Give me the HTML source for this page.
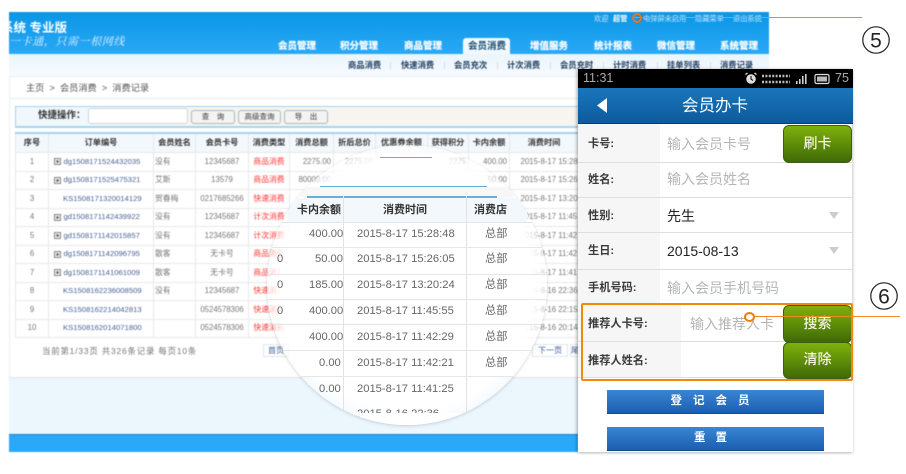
<!DOCTYPE html>
<html lang="zh"><head><meta charset="utf-8"><title>会员办卡</title>
<style>
html,body{margin:0;padding:0;background:#fff}
body{width:906px;height:474px;overflow:hidden;position:relative;font-family:"Liberation Sans","Noto Sans CJK SC",sans-serif;color:#333}
.a{position:absolute;white-space:nowrap}
#app{position:absolute;left:9px;top:12px;width:760px;height:440px;overflow:hidden;background:#fff}
#appwrap{position:absolute;left:0;top:0;width:906px;height:474px;filter:blur(.4px)}
.nav{font-size:9.5px;font-weight:bold;color:#fff;top:41px;line-height:12px;text-shadow:0 0 1px #cfeaff}
.sub{font-size:8.3px;font-weight:bold;color:#1f3c5e;top:60px;line-height:11px}
.sep{width:1px;height:7px;top:62px;background:#d5dde5}
.tl{font-size:7.2px;color:#cfe9ff;top:14px;line-height:9px}
.btn{height:12px;top:110px;border:1px solid #a9b8c4;border-radius:3px;background:#f3f3f1;font-size:7.5px;line-height:12px;text-align:center;color:#333}
table.t{position:absolute;left:15px;top:132px;border-collapse:collapse;table-layout:fixed;width:563px;font-size:7.8px;color:#777;background:#fff}
table.t td,table.t th{border:1px solid #e6e9ec;padding:0;height:17.5px;line-height:10px;text-align:center;white-space:nowrap;overflow:hidden}
table.t th{height:18px;background:#f2f8fc;color:#333;font-size:8.2px;font-weight:bold}
table.t{border-top:2px solid #a6d2ee}
td.n{text-align:left!important;color:#4a6396;font-size:7.7px;padding-left:14.5px!important;position:relative}
td.n.k{padding-left:14px!important}
td.n i{position:absolute;left:5px;top:5px;width:5px;height:5px;border:1px solid #888;background:linear-gradient(#555,#555) center/3px 1px no-repeat,linear-gradient(#555,#555) center/1px 3px no-repeat,#eee}
td.l{text-align:left!important;padding-left:1px!important}
td.r{color:#f33}
td.R{text-align:right!important;padding-right:2px!important}
td.T{text-align:left!important;padding-left:10.5px!important}
#lens{position:absolute;left:267px;top:145px;width:280px;height:280px;border-radius:50%;background:radial-gradient(circle closest-side at center,#fff 0,#fff 90%,rgba(255,255,255,.78) 95%,rgba(255,255,255,.5) 100%);box-shadow:0 1px 3px rgba(120,120,120,.3);overflow:hidden}
#lens .hl{position:absolute;height:1px;background:#62b0de}
#lens .c{position:absolute;font-size:11.2px;line-height:14px;color:#666;white-space:nowrap}
#lens .h{font-weight:bold;color:#333;font-size:11px}
#lens .ln{position:absolute;height:1px;background:#e6e6e6;left:0;width:280px}
#lens .v{position:absolute;width:1px;background:#e3e3e3;top:51px;height:216px}
#phone{position:absolute;left:578px;top:69px;width:275px;height:383px;background:#fff;box-shadow:0 1px 3px rgba(0,0,0,.2),-2px 0 3px rgba(0,0,0,.18)}
#phone .lab{position:absolute;left:0;width:82px;background:#f6f6f6}
#phone .lt{position:absolute;left:10px;font-size:11.2px;font-weight:bold;color:#3a3a3a;line-height:16px;white-space:nowrap}
#phone .ph{position:absolute;left:89px;font-size:14px;color:#b5b5b5;line-height:18px;white-space:nowrap}
#phone .val{position:absolute;left:89px;font-size:14px;color:#222;line-height:18px;white-space:nowrap}
#phone .line{position:absolute;left:0;width:275px;height:1px;background:#dedede}
.g{position:absolute;left:205px;width:67px;border:1px solid #3f5c12;border-radius:6px;background:linear-gradient(#7fb10c,#3f6a05);color:#f4f4e0;font-size:14px;text-align:center;font-weight:500;box-sizing:content-box}
.b{position:absolute;left:29px;width:217px;height:24px;background:linear-gradient(#3a86d4,#1b5eb0);color:#fff;font-size:11.5px;font-weight:bold;text-align:center;line-height:23px;border-bottom:1px solid #154a8c;box-sizing:border-box}
.arr{position:absolute;left:251px;width:0;height:0;border-left:5px solid transparent;border-right:5px solid transparent;border-top:7px solid #ccc}
</style></head><body>
<div id="appwrap">
<div id="app"></div>
<!-- header -->
<div class="a" style="left:9px;top:12px;width:760px;height:42px;background:linear-gradient(#0a96e6,#2aa9f6)"></div>
<div class="a" style="left:9px;top:54px;width:760px;height:23px;background:linear-gradient(#eaf5fc,#f7fbfe);border-bottom:1px solid #e4edf3;box-sizing:border-box"></div>
<div class="a" style="left:9px;top:98px;width:569px;height:1px;background:#e8eef2"></div>
<div class="a" style="left:9px;top:77px;width:1px;height:300px;background:#eee"></div>
<div class="a" style="left:9px;top:21px;width:60px;overflow:hidden;height:14px;font-size:12.5px;font-weight:bold;color:#fff;line-height:14px"><span style="margin-left:-8px">系统 专业版</span></div>
<div class="a" style="left:9px;top:35px;width:116px;overflow:hidden;height:14px;font:italic 11px/14px 'Liberation Serif','Noto Serif CJK SC',serif;color:#dff1ff;letter-spacing:.6px">一卡通，只需一根网线</div>
<span class="a nav" style="left:278px">会员管理</span>
<span class="a nav" style="left:340px">积分管理</span>
<span class="a nav" style="left:404px">商品管理</span>
<div class="a" style="left:463px;top:38px;width:47px;height:16px;background:#f2f9fd;border-radius:3px 3px 0 0"></div>
<span class="a nav" style="left:468px;color:#174a72;text-shadow:none">会员消费</span>
<span class="a nav" style="left:530px">增值服务</span>
<span class="a nav" style="left:594px">统计报表</span>
<span class="a nav" style="left:657px">微信管理</span>
<span class="a nav" style="left:720px">系统管理</span>
<span class="a tl" style="left:594px">欢迎</span>
<span class="a tl" style="left:613px;font-weight:bold;color:#fff">超管</span>
<div class="a" style="left:638px;top:15px;width:5px;height:6px;background:#3c79b8"></div>
<span class="a tl" style="left:643px">电弹屏未启用</span>
<span class="a tl" style="left:695px">隐藏菜单</span>
<span class="a tl" style="left:733px">退出系统</span>
<span class="a sub" style="left:348px">商品消费</span><div class="a sep" style="left:390px"></div>
<span class="a sub" style="left:401px">快速消费</span><div class="a sep" style="left:444px"></div>
<span class="a sub" style="left:454px">会员充次</span><div class="a sep" style="left:497px"></div>
<span class="a sub" style="left:507px">计次消费</span><div class="a sep" style="left:550px"></div>
<span class="a sub" style="left:560px">会员充时</span><div class="a sep" style="left:603px"></div>
<span class="a sub" style="left:613px">计时消费</span><div class="a sep" style="left:657px"></div>
<span class="a sub" style="left:667px">挂单列表</span><div class="a sep" style="left:710px"></div>
<span class="a sub" style="left:720px">消费记录</span>
<!-- breadcrumb -->
<span class="a" style="left:26px;top:82px;font-size:9.2px;line-height:12px;color:#555">主页 &nbsp;&gt;&nbsp; 会员消费 &nbsp;&gt;&nbsp; 消费记录</span>
<!-- toolbar -->
<div class="a" style="left:15px;top:106px;width:563px;height:22px;box-sizing:border-box;border:1px solid #a6d2ee;border-width:1px 0 2px 1px;background:linear-gradient(90deg,#f1f8fd 0,#f1f8fd 14%,#f7f5f0 15%)"></div>
<span class="a" style="left:38px;top:110px;font-size:9.5px;font-weight:bold;line-height:12px;color:#333">快捷操作：</span>
<div class="a" style="left:88px;top:108px;width:100px;height:16px;box-sizing:border-box;background:#fff;border:1px solid #ccd6dd;border-radius:3px"></div>
<div class="a btn" style="left:191px;width:42px">查　询</div>
<div class="a btn" style="left:238px;width:41px">高级查询</div>
<div class="a btn" style="left:284px;width:42px">导　出</div>
<!-- table -->
<table class="t">
<colgroup><col style="width:33px"><col style="width:105px"><col style="width:42px"><col style="width:53px"><col style="width:41px"><col style="width:44px"><col style="width:42px"><col style="width:52px"><col style="width:41px"><col style="width:41px"><col style="width:69px"></colgroup>
<tr><th>序号</th><th>订单编号</th><th>会员姓名</th><th>会员卡号</th><th>消费类型</th><th>消费总额</th><th>折后总价</th><th>优惠券余额</th><th>获得积分</th><th>卡内余额</th><th>消费时间</th></tr>
<tr><td>1</td><td class="n"><i></i>dg1508171524432035</td><td class="l">没有</td><td>12345687</td><td class="r">商品消费</td><td class="R">2275.00</td><td class="R">2275.00</td><td></td><td class="R">2275</td><td class="R">400.00</td><td class="T">2015-8-17 15:28</td></tr>
<tr><td>2</td><td class="n"><i></i>dg1508171525475321</td><td class="l">艾斯</td><td>13579</td><td class="r">商品消费</td><td class="R">80000.00</td><td></td><td></td><td></td><td class="R">50.00</td><td class="T">2015-8-17 15:26</td></tr>
<tr><td>3</td><td class="n k">KS1508171320014129</td><td class="l">贺春梅</td><td>0217685266</td><td class="r">快速消费</td><td></td><td></td><td></td><td></td><td class="R">185.00</td><td class="T">2015-8-17 13:20</td></tr>
<tr><td>4</td><td class="n"><i></i>gd1508171142439922</td><td class="l">没有</td><td>12345687</td><td class="r">计次消费</td><td></td><td></td><td></td><td></td><td></td><td class="T">2015-8-17 11:45</td></tr>
<tr><td>5</td><td class="n"><i></i>gd1508171142015857</td><td class="l">没有</td><td>12345687</td><td class="r">计次消费</td><td></td><td></td><td></td><td></td><td></td><td class="T">2015-8-17 11:42</td></tr>
<tr><td>6</td><td class="n"><i></i>dg1508171142096795</td><td class="l">散客</td><td>无卡号</td><td class="r">商品消费</td><td></td><td></td><td></td><td></td><td></td><td class="T">2015-8-17 11:42</td></tr>
<tr><td>7</td><td class="n"><i></i>dg1508171141061009</td><td class="l">散客</td><td>无卡号</td><td class="r">商品消费</td><td></td><td></td><td></td><td></td><td></td><td class="T">2015-8-17 11:41</td></tr>
<tr><td>8</td><td class="n k">KS1508162236008509</td><td class="l">没有</td><td>12345687</td><td class="r">快速消费</td><td></td><td></td><td></td><td></td><td></td><td class="T">2015-8-16 22:36</td></tr>
<tr><td>9</td><td class="n k">KS1508162214042813</td><td class="l"></td><td>0524578306</td><td class="r">快速消费</td><td></td><td></td><td></td><td></td><td></td><td class="T">2015-8-16 22:15</td></tr>
<tr><td>10</td><td class="n k">KS1508162014071800</td><td class="l"></td><td>0524578306</td><td class="r">快速消费</td><td></td><td></td><td></td><td></td><td></td><td class="T">2015-8-16 20:14</td></tr>
</table>
<span class="a" style="left:42px;top:345px;font-size:8.4px;line-height:12px;color:#777;letter-spacing:.85px">当前第1/33页 共326条记录 每页10条</span>
<div class="a" style="left:263px;top:344px;width:24px;height:11px;border:1px solid #dfe6ec;font-size:8px;line-height:11px;text-align:center;color:#3b5b94">首页</div>
<div class="a" style="left:532px;top:344px;width:34px;height:11px;border:1px solid #dfe6ec;font-size:8px;line-height:11px;text-align:center;color:#3b5b94">下一页</div>
<div class="a" style="left:570px;top:344px;width:8px;height:11px;border:1px solid #dfe6ec;border-right:0;font-size:8px;line-height:11px;overflow:hidden;color:#3b5b94">尾页</div>
<!-- footer -->
<div class="a" style="left:9px;top:377px;width:569px;height:1px;background:#e3e3e3"></div>
<div class="a" style="left:9px;top:378px;width:569px;height:56px;background:#ebf6fd"></div>
<div class="a" style="left:9px;top:434px;width:569px;height:18px;background:#2aa9fb;border-top:1px solid #1785cf;box-sizing:border-box"></div>
</div>
<!-- magnifier -->
<div id="lens">
 <div class="a" style="left:33px;top:42px;width:214px;height:10px;background:#f7f7f5"></div>
 <div class="hl" style="left:113px;top:12px;width:52px"></div>
 <div class="hl" style="left:53px;top:41px;width:167px;height:1px"></div>
 <div class="hl" style="left:40px;top:51px;width:190px;height:2px"></div>
 <div class="a" style="left:20px;top:53px;width:240px;height:24px;background:#f2f8fc"></div>
 <div class="v" style="left:76px"></div><div class="v" style="left:199px"></div>
 <div class="ln" style="top:77px"></div><div class="ln" style="top:102px"></div><div class="ln" style="top:129px"></div><div class="ln" style="top:154px"></div><div class="ln" style="top:179px"></div><div class="ln" style="top:205px"></div><div class="ln" style="top:231px"></div>
 <span class="c h" style="left:30px;top:58px">卡内余额</span><span class="c h" style="left:116px;top:58px">消费时间</span><span class="c h" style="left:207px;top:58px">消费店</span>
 <span class="c" style="left:42px;top:82px">400.00</span><span class="c" style="left:90px;top:82px">2015-8-17 15:28:48</span><span class="c" style="left:218px;top:82px">总部</span>
 <span class="c" style="left:48px;top:107px">50.00</span><span class="c" style="left:90px;top:107px">2015-8-17 15:26:05</span><span class="c" style="left:218px;top:107px">总部</span>
 <span class="c" style="left:42px;top:133px">185.00</span><span class="c" style="left:90px;top:133px">2015-8-17 13:20:24</span><span class="c" style="left:218px;top:133px">总部</span>
 <span class="c" style="left:42px;top:159px">400.00</span><span class="c" style="left:90px;top:159px">2015-8-17 11:45:55</span><span class="c" style="left:218px;top:159px">总部</span>
 <span class="c" style="left:42px;top:185px">400.00</span><span class="c" style="left:90px;top:185px">2015-8-17 11:42:29</span><span class="c" style="left:218px;top:185px">总部</span>
 <span class="c" style="left:52px;top:211px">0.00</span><span class="c" style="left:90px;top:211px">2015-8-17 11:42:21</span><span class="c" style="left:218px;top:211px">总部</span>
 <span class="c" style="left:52px;top:237px">0.00</span><span class="c" style="left:90px;top:237px">2015-8-17 11:41:25</span>
 <span class="c" style="left:90px;top:262px">2015-8-16 22:36</span>
 <span class="c" style="left:10px;top:107px">0</span><span class="c" style="left:10px;top:133px">0</span><span class="c" style="left:10px;top:159px">0</span>
 <div class="a" style="left:40px;top:268px;width:200px;height:12px;background:#fff"></div>
</div>
<!-- phone -->
<div id="phone">
 <div class="a" style="left:0;top:0;width:275px;height:19px;background:#000"></div>
 <span class="a" style="left:5px;top:1px;font-size:12.5px;line-height:17px;color:#aaa">11:31</span>
 <svg class="a" style="left:166px;top:2px" width="90" height="16" viewBox="0 0 90 16">
  <circle cx="7" cy="8" r="4.8" fill="#ddd"/><path d="M7 5v3l2 1.5" stroke="#000" stroke-width="1" fill="none"/><path d="M1.5 3.5l2-1.5M12.5 3.5l-2-1.5" stroke="#ddd" stroke-width="1.4"/>
  <path d="M18 5h28M18 11h28" stroke="#bbb" stroke-width="2.4" stroke-dasharray="2 1.4"/>
  <path d="M52 13h1.6V10H52zM55 13h1.6V8H55zM58 13h1.6V5H58zM61 13h1.6V3H61z" fill="#ccc"/>
  <rect x="71" y="3.5" width="14" height="9" rx="1.5" fill="none" stroke="#ddd" stroke-width="1.2"/><rect x="73" y="5.5" width="10" height="5" fill="#bbb"/>
 </svg>
 <span class="a" style="left:257px;top:1px;font-size:12.5px;line-height:17px;color:#aaa">75</span>
 <div class="a" style="left:0;top:19px;width:275px;height:36px;background:linear-gradient(#1a76bc,#0d5a9c);border-bottom:1px solid #0a3c68;box-sizing:border-box"></div>
 <svg class="a" style="left:18px;top:29px" width="12" height="16"><path d="M11 0V15L1 7.5z" fill="#fff"/></svg>
 <span class="a" style="left:104px;top:26px;font-size:16.5px;line-height:22px;color:#fff">会员办卡</span>

 <div class="lab" style="top:55px;height:179px"></div>
 <div class="lab" style="top:234px;height:74px;width:103px"></div>
 <div class="line" style="top:93px"></div><div class="line" style="top:128px"></div><div class="line" style="top:163px"></div><div class="line" style="top:200px"></div><div class="line" style="top:272px"></div><div class="line" style="top:308px"></div>
 <div class="a" style="left:274px;top:55px;width:1px;height:253px;background:#ddd"></div>
 <span class="lt" style="top:67px">卡号:</span><span class="lt" style="top:103px">姓名:</span><span class="lt" style="top:139px">性别:</span><span class="lt" style="top:174px">生日:</span><span class="lt" style="top:211px">手机号码:</span><span class="lt" style="top:247px">推荐人卡号:</span><span class="lt" style="top:284px">推荐人姓名:</span>
 <span class="ph" style="top:66px">输入会员卡号</span><span class="ph" style="top:101px">输入会员姓名</span>
 <span class="val" style="top:138px">先生</span><span class="val" style="top:173px">2015-08-13</span>
 <div class="arr" style="top:143px"></div><div class="arr" style="top:178px"></div>
 <span class="ph" style="top:210px">输入会员手机号码</span>
 <span class="ph" style="left:112px;top:246px">输入推荐人卡</span>
 <div class="g" style="top:56px;height:36px;line-height:34px">刷卡</div>
 <div class="g" style="top:236px;height:36px;line-height:34px">搜索</div>
 <div class="g" style="top:273px;height:35px;line-height:33px">清除</div>
 <div class="a" style="left:3px;top:234px;width:272px;height:78px;box-sizing:border-box;border:2px solid #ef8b0c;border-radius:2px"></div>
 <div class="b" style="top:321px;letter-spacing:11px">登记会员</div>
 <div class="b" style="top:358px;letter-spacing:10px">重置</div>
</div>
<!-- annotations -->
<div class="a" style="left:634px;top:17px;width:228px;height:1px;background:#e8893a"></div>
<div class="a" style="left:632px;top:13px;width:10px;height:10px;box-sizing:border-box;border:2px solid #e8702a;border-radius:50%"></div>
<div class="a" style="left:750px;top:316px;width:150px;height:1px;background:#ef8b22"></div>
<div class="a" style="left:744px;top:312px;width:11px;height:10px;box-sizing:border-box;border:2.5px solid #f07c00;border-radius:50%;background:#fff"></div>
<svg class="a" style="left:859px;top:25px" width="36" height="32"><circle cx="17" cy="15" r="13.2" fill="none" stroke="#222" stroke-width="1.2"/><text x="17" y="22.5" font-size="21" text-anchor="middle" fill="#222" font-family="Liberation Sans">5</text></svg>
<svg class="a" style="left:868px;top:281px" width="36" height="32"><circle cx="16" cy="15" r="13.2" fill="none" stroke="#222" stroke-width="1.2"/><text x="16" y="22.5" font-size="21" text-anchor="middle" fill="#222" font-family="Liberation Sans">6</text></svg>
</body></html>
